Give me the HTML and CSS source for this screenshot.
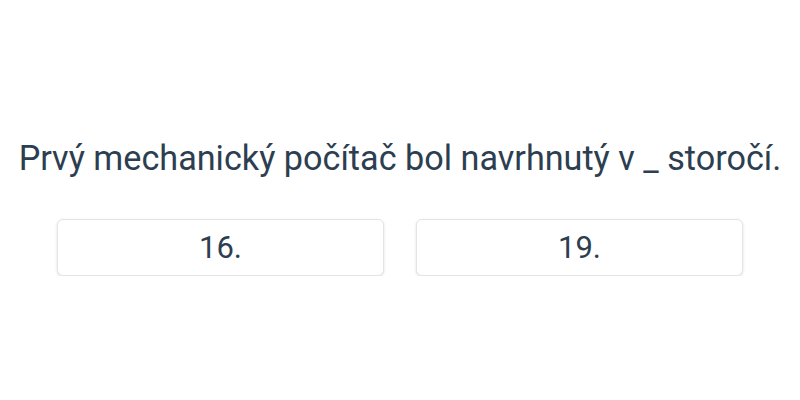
FILE: index.html
```html
<!DOCTYPE html>
<html lang="sk">
<head>
<meta charset="utf-8">
<link rel="stylesheet" href="styles.css">
</head>
<body>
<main class="quiz">
  <h1 class="question">Prvý mechanický počítač bol navrhnutý v _ storočí.</h1>
  <div class="options">
    <button class="option">16.</button>
    <button class="option">19.</button>
  </div>
</main>
</body>
</html>
```
FILE: styles.css
```css
html, body {
  margin: 0;
  padding: 0;
  background: #ffffff;
}
body {
  font-family: Roboto, "Noto Sans", sans-serif;
  color: #2c3e50;
}
.quiz {
  display: flex;
  flex-direction: column;
  align-items: center;
  padding-top: 136px;
}
.question {
  margin: 0;
  font-size: 34.2px;
  font-weight: 400;
  line-height: 44px;
  text-align: center;
  white-space: nowrap;
}
.options {
  display: flex;
  gap: 32px;
  margin-top: 39px;
}
.option {
  width: 327px;
  height: 57px;
  box-sizing: border-box;
  background: #fff;
  border: 1px solid #e4e4e4;
  border-radius: 6px;
  box-shadow: 0 1px 3px rgba(0,0,0,0.12);
  font-family: Roboto, "Noto Sans", sans-serif;
  font-size: 31px;
  color: #2c3e50;
  padding: 0;
}
```
